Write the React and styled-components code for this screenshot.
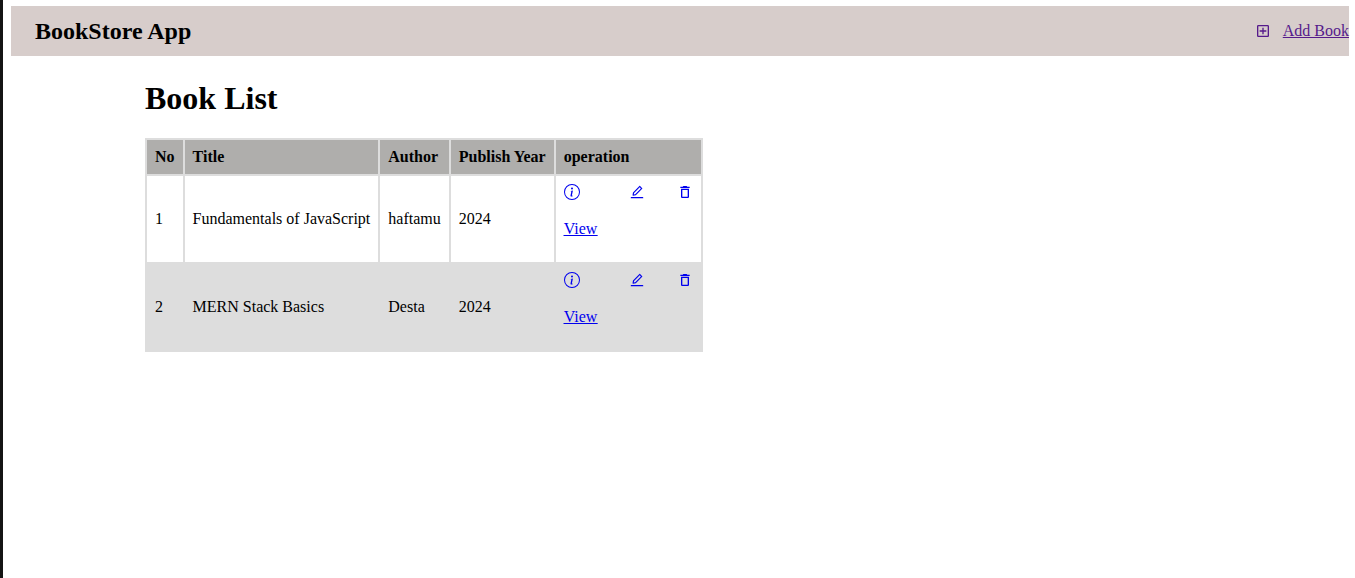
import React from "react";
import styled, { createGlobalStyle } from "styled-components";
import { MdOutlineAddBox, MdOutlineDelete } from "react-icons/md";
import { BsInfoCircle } from "react-icons/bs";
import { AiOutlineEdit } from "react-icons/ai";

const GlobalStyle = createGlobalStyle`
  body {
    margin: 0;
    background: #fff;
    color: #000;
    font: 16px/18px "Liberation Serif", "Times New Roman", serif;
  }
`;

const Page = styled.div`
  box-sizing: border-box;
  min-height: 100vh;
  padding: 6px 6px 0 8px;
  border-left: 3px solid #141414;
`;

const Navbar = styled.header`
  display: flex;
  align-items: center;
  justify-content: space-between;
  height: 50px;
  padding-left: 24px;
  background: #d7cdcb;
`;

const Brand = styled.h2`
  margin: 0;
  font-size: 24px;
  line-height: 28px;
`;

const AddLink = styled.a`
  display: flex;
  align-items: center;
  gap: 12px;
  color: #551a8b;
  text-decoration: none;

  span {
    text-decoration: underline;
  }
`;

const Main = styled.main`
  padding: 24px 0 0 134px;
`;

const Heading = styled.h1`
  margin: 0 0 22px;
  font-size: 32px;
  line-height: 36px;
`;

const Table = styled.table`
  border-collapse: collapse;
`;

const Row = styled.tr`
  background: ${({ $shaded }) => ($shaded ? "#dddddd" : "#fff")};
`;

const HeadCell = styled.th`
  padding: 8px;
  border: 2px solid #dddddd;
  background: #afaeac;
  text-align: left;
`;

const Cell = styled.td`
  padding: 8px;
  border: 2px solid #dddddd;
`;

const Operations = styled.div`
  display: flex;
  justify-content: space-between;
  width: 129px;
  height: 70px;
`;

const IconLink = styled.a`
  display: block;
  color: #0000ee;

  svg {
    display: block;
  }

  p {
    margin: 20px 0 0;
    text-decoration: underline;
  }
`;

const books = [
  { title: "Fundamentals of JavaScript", author: "haftamu", year: 2024 },
  { title: "MERN Stack Basics", author: "Desta", year: 2024 },
];

const columns = ["No", "Title", "Author", "Publish Year", "operation"];

export default function App() {
  return (
    <>
      <GlobalStyle />
      <Page>
        <Navbar>
          <Brand>BookStore App</Brand>
          <AddLink href="#add">
            <MdOutlineAddBox size={16} />
            <span>Add Book</span>
          </AddLink>
        </Navbar>
        <Main>
          <Heading>Book List</Heading>
          <Table>
            <thead>
              <tr>
                {columns.map((name) => (
                  <HeadCell key={name} scope="col">{name}</HeadCell>
                ))}
              </tr>
            </thead>
            <tbody>
              {books.map((book, i) => (
                <Row key={book.title} $shaded={i % 2 === 1}>
                  <Cell>{i + 1}</Cell>
                  <Cell>{book.title}</Cell>
                  <Cell>{book.author}</Cell>
                  <Cell>{book.year}</Cell>
                  <Cell>
                    <Operations>
                      <IconLink href="#view">
                        <BsInfoCircle size={16} />
                        <p>View</p>
                      </IconLink>
                      <IconLink href="#edit" aria-label="Edit">
                        <AiOutlineEdit size={16} />
                      </IconLink>
                      <IconLink href="#delete" aria-label="Delete">
                        <MdOutlineDelete size={16} />
                      </IconLink>
                    </Operations>
                  </Cell>
                </Row>
              ))}
            </tbody>
          </Table>
        </Main>
      </Page>
    </>
  );
}
